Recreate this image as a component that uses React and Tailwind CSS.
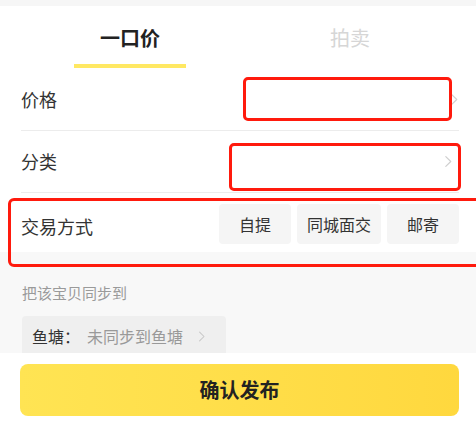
import React from 'react';

const Chevron = ({ className }) => (
  <svg className={className} viewBox="0 0 10 14" fill="none">
    <path d="M2 1.5 L7.5 7 L2 12.5" stroke="currentColor" strokeWidth="1.3" strokeLinecap="round" strokeLinejoin="round" />
  </svg>
);

const App = () => {
  return (
    <div
      className="w-[476px] h-[421px] bg-white overflow-hidden text-[#333]"
      style={{ fontFamily: '"Noto Sans CJK SC", "Noto Sans", sans-serif' }}
    >
      <div className="h-[6px] bg-[#f6f6f6]" />

      {/* tabs */}
      <div className="flex pl-[20px]">
        <div className="w-[220px] flex flex-col items-center pt-[18px]">
          <span className="text-[20px] leading-[28px] font-bold text-[#222]">一口价</span>
          <div className="mt-[12px] h-[4px] w-[112px] bg-[#ffe862]" />
        </div>
        <div className="w-[220px] flex flex-col items-center pt-[18px]">
          <span className="text-[20px] leading-[28px] text-[#d6d6d6]">拍卖</span>
        </div>
      </div>

      {/* price */}
      <div className="relative h-[62px] flex items-center pl-[21px] pr-[17px]">
        <span className="text-[18px]">价格</span>
        <Chevron className="ml-auto w-[9px] h-[13px] text-[#d0d0d0]" />
        <div className="absolute left-[243px] top-[9px] w-[209px] h-[44px] border-[3px] border-[#ff1a0d] rounded-[5px] bg-white" />
      </div>
      <div className="ml-[21px] mr-[17px] h-px bg-[#ececec]" />

      {/* category */}
      <div className="relative h-[61px] flex items-center pl-[21px] pr-[23px]">
        <span className="text-[18px]">分类</span>
        <Chevron className="ml-auto w-[9px] h-[13px] text-[#cfcfcf]" />
        <div className="absolute left-[229px] top-[12px] w-[232px] h-[48px] border-[3px] border-[#ff1a0d] rounded-[5px]" />
      </div>
      <div className="ml-[21px] mr-[17px] h-px bg-[#ececec]" />

      {/* trade method */}
      <div className="relative h-[59px] flex items-start pl-[21px] pr-[17px]">
        <span className="text-[18px] mt-[20px]">交易方式</span>
        <div className="ml-auto mt-[11px] flex gap-[6px] text-[16px]">
          <div className="w-[72px] h-[40px] flex items-center justify-center bg-[#f5f5f5] rounded-[4px]">自提</div>
          <div className="w-[84px] h-[40px] flex items-center justify-center bg-[#f5f5f5] rounded-[4px]">同城面交</div>
          <div className="w-[72px] h-[40px] flex items-center justify-center bg-[#f5f5f5] rounded-[4px]">邮寄</div>
        </div>
        <div className="absolute left-[8px] top-[5px] w-[474px] h-[69px] border-[3px] border-[#ff1a0d] rounded-[6px] z-10" />
      </div>

      {/* sync */}
      <div className="h-[101px] bg-[#f8f8f8] overflow-hidden pl-[22px] pt-[30px]">
        <div className="text-[15px] leading-[22px] text-[#9a9a9a]">把该宝贝同步到</div>
        <div className="mt-[12px] w-[204px] h-[40px] bg-[#efefef] rounded-[4px] flex items-center pl-[10px] text-[16px]">
          <span className="text-[#333]">鱼塘：</span>
          <span className="ml-[7px] text-[#999]">未同步到鱼塘</span>
          <Chevron className="ml-[15px] w-[8px] h-[13px] text-[#c8c8c8]" />
        </div>
      </div>

      {/* submit */}
      <div className="pl-[20px] pr-[17px] pt-[11px]">
        <button className="w-full h-[52px] rounded-[8px] bg-gradient-to-r from-[#ffe453] to-[#ffd83e] text-[20px] font-bold text-[#222]">
          确认发布
        </button>
      </div>
    </div>
  );
};

export default App;
